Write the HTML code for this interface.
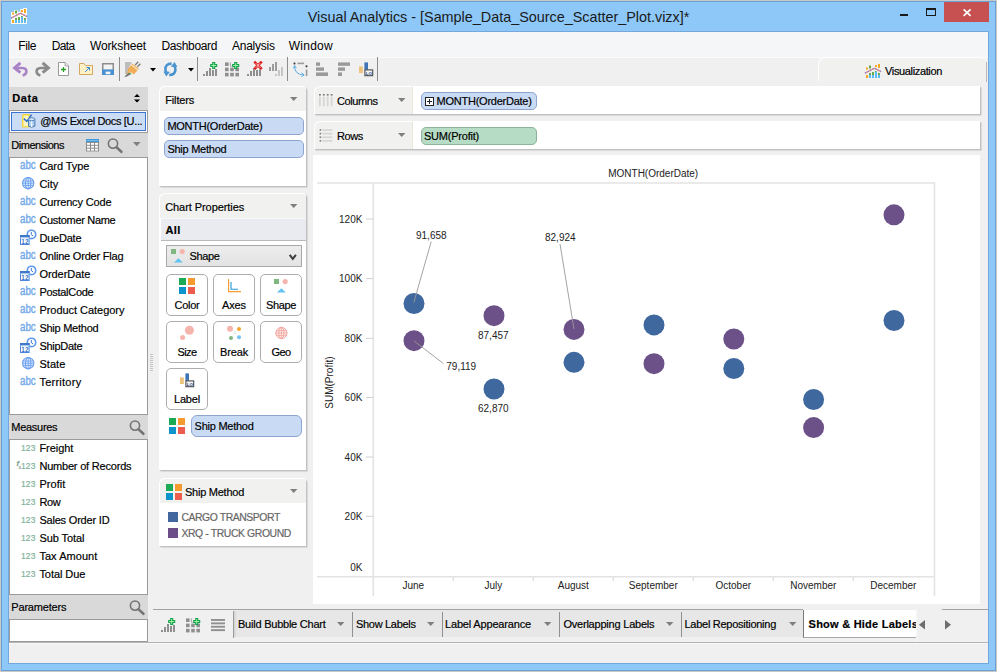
<!DOCTYPE html>
<html lang="en"><head><meta charset="utf-8"><title>Visual Analytics - [Sample_Data_Source_Scatter_Plot.vizx]*</title>
<style>

html,body{margin:0;padding:0;}
body{width:997px;height:672px;position:relative;overflow:hidden;background:#c9c9c9;font-family:"Liberation Sans",sans-serif;font-size:11px;}
div,svg,span.t{position:absolute;box-sizing:border-box;}
span.t{white-space:nowrap;-webkit-text-stroke:0.18px;}
svg{overflow:visible;}
.pill{border:1px solid #8fa5cf;background:#c9daf4;border-radius:5px;}
.gpill{border:1px solid #8fb39d;background:#b7dcc5;border-radius:5px;}
.btn{border:1px solid #adadad;background:#fff;border-radius:5px;}
.card{background:#fff;box-shadow:1px 1px 1px #bdbdbd, 2px 2px 1px #dcdcdc;}
.cardh{background:#f1f1ef;border-top:1px solid #fff;border-left:1px solid #fff;border-top-left-radius:6px;border-top-right-radius:4px;}
</style></head><body>
<div style="left:1px;top:1px;width:995px;height:670px;background:#8dc8f8;border:1px solid #6c9fd3;"></div>
<div style="left:8px;top:31px;width:981px;height:633px;background:#f0f0f0;border:1px solid #74a8dc;"></div>
<svg style="left:11px;top:8px" width="16" height="16" viewBox="0 0 16 16"><path d="M0 4 H3.1 V2.1 H6.7 V3.7 H9.2 V1 H12.2 V0 H16 V16 H0 Z" fill="#fdfaf3"/>
<rect x="1" y="4.5" width="2" height="2" fill="#f5a623"/><rect x="4" y="2.5" width="2" height="3" fill="#6aa84f"/>
<rect x="10" y="2" width="2" height="2" fill="#f5a623"/><rect x="13" y="1" width="2" height="4" fill="#f5a623"/>
<rect x="1" y="12" width="2" height="3" fill="#f5a623"/>
<rect x="4" y="10" width="2" height="2" fill="#6aa84f"/><rect x="4" y="12" width="2" height="3" fill="#5bbcf5"/>
<rect x="7" y="9" width="2" height="3" fill="#6aa84f"/><rect x="7" y="12" width="2" height="3" fill="#5bbcf5"/>
<rect x="10" y="8.5" width="2" height="6.5" fill="#5bbcf5"/><rect x="10" y="8" width="1.5" height="1" fill="#6aa84f"/>
<rect x="13" y="10" width="2" height="2" fill="#6aa84f"/><rect x="13" y="12" width="2" height="3" fill="#5bbcf5"/>
<path d="M0 10.2 L9.5 5.2 L16 8.6" fill="none" stroke="#f08f7a" stroke-width="1.3"/>
<path d="M0 10.2 L9.5 5.2 L16 8.6" fill="none" stroke="#8b84d6" stroke-width="1.3" stroke-dasharray="1.4 1.4"/></svg>
<span class="t" style="left:307.7px;top:7.51px;font-size:14.4px;line-height:19px;color:#1a1a1a;letter-spacing:-0.008px;-webkit-text-stroke:0;">Visual Analytics - [Sample_Data_Source_Scatter_Plot.vizx]*</span>
<div style="left:900px;top:14px;width:8px;height:2px;background:#1a1a1a;"></div>
<div style="left:926px;top:8px;width:10px;height:8px;border:1px solid #1a1a1a;border-top-width:2px;"></div>
<div style="left:944px;top:2px;width:45px;height:20px;background:#c75050;"></div>
<svg style="left:962px;top:8px" width="10" height="9" viewBox="0 0 10 9"><path d="M1.6 1.4 L8.6 7.8 M8.6 1.4 L1.6 7.8" stroke="#fff" stroke-width="1.7" fill="none"/></svg>
<div style="left:9px;top:32px;width:979px;height:25px;background:#f5f6f7;"></div>
<div style="left:9px;top:57px;width:979px;height:1px;background:#fbfbfb;"></div>
<span class="t" style="left:18.2px;top:37.54px;font-size:12px;line-height:16px;color:#000;letter-spacing:-0.386px;-webkit-text-stroke:0;">File</span>
<span class="t" style="left:51.7px;top:37.54px;font-size:12px;line-height:16px;color:#000;letter-spacing:-0.640px;-webkit-text-stroke:0;">Data</span>
<span class="t" style="left:89.9px;top:37.54px;font-size:12px;line-height:16px;color:#000;letter-spacing:-0.105px;-webkit-text-stroke:0;">Worksheet</span>
<span class="t" style="left:161.5px;top:37.54px;font-size:12px;line-height:16px;color:#000;letter-spacing:-0.358px;-webkit-text-stroke:0;">Dashboard</span>
<span class="t" style="left:232px;top:37.54px;font-size:12px;line-height:16px;color:#000;letter-spacing:-0.248px;-webkit-text-stroke:0;">Analysis</span>
<span class="t" style="left:288.7px;top:37.54px;font-size:12px;line-height:16px;color:#000;letter-spacing:0.269px;-webkit-text-stroke:0;">Window</span>
<div style="left:119px;top:57px;width:1px;height:24px;background:#8c8c8c;"></div>
<div style="left:197px;top:57px;width:1px;height:24px;background:#8c8c8c;"></div>
<div style="left:287px;top:57px;width:1px;height:24px;background:#8c8c8c;"></div>
<div style="left:377px;top:57px;width:1px;height:24px;background:#8c8c8c;"></div>
<svg style="left:13px;top:62px" width="15" height="15" viewBox="0 0 15 15"><path d="M7.4 0.9 L1.6 6 L7.4 10.6" fill="none" stroke="#a983c6" stroke-width="3" stroke-linejoin="miter"/><path d="M2.6 6 H9.4 Q13.4 6.2 13.4 9.6 Q13.2 12.6 9.6 13.4" fill="none" stroke="#a983c6" stroke-width="2.6"/></svg>
<svg style="left:35px;top:62px" width="15" height="15" viewBox="0 0 15 15"><path d="M7.6 0.9 L13.4 6 L7.6 10.6" fill="none" stroke="#8a8a8a" stroke-width="3" stroke-linejoin="miter"/><path d="M12.4 6 H5.6 Q1.6 6.2 1.6 9.6 Q1.8 12.6 5.4 13.4" fill="none" stroke="#8a8a8a" stroke-width="2.6"/></svg>
<svg style="left:58px;top:62px" width="11" height="14" viewBox="0 0 11 14"><path d="M0.5 0.5 H7 L10.5 4 V13.5 H0.5 Z" fill="#fff" stroke="#9a9a9a"/><path d="M7 0.5 V4 H10.5" fill="#e4e4e4" stroke="#9a9a9a" stroke-width="0.8"/><path d="M5.5 5 V10 M3 7.5 H8" stroke="#2a9d2a" stroke-width="1.3"/></svg>
<svg style="left:79px;top:63px" width="14" height="12" viewBox="0 0 14 12"><path d="M0.5 0.5 H5 L6.5 2.5 H13.5 V11.5 H0.5 Z" fill="#fdf1c7" stroke="#d2a860" stroke-width="1"/><path d="M6 9 L10.5 4.5 M7.5 4.5 H10.5 V7.5" fill="none" stroke="#3d8fd1" stroke-width="1"/></svg>
<svg style="left:102px;top:63px" width="12" height="12" viewBox="0 0 12 12"><rect x="0.75" y="0.75" width="10.5" height="7" fill="#f4f4f4" stroke="#8c8c8c" stroke-width="1.5"/><rect x="0" y="6.4" width="12" height="5.6" fill="#4a90d0"/><rect x="3.6" y="8.6" width="4.8" height="2.6" fill="#f4f4f4"/></svg>
<svg style="left:124px;top:62px" width="16" height="15" viewBox="0 0 16 15"><path d="M1 1 H7.4 M1 3 H6.4 M1 5 H5.4 M1 7 H5 M1 9 H5 M1 11 H4" stroke="#8a8a8a" stroke-width="1.1"/><path d="M0.2 14.8 L5.2 10 L7.4 12 L2.4 14.8 Z" fill="#757575"/><path d="M3.6 7.4 L8.4 1.6 L15 6.8 L9.8 12.4 Z" fill="#efad56"/><path d="M7.4 2.8 L14 8" stroke="#fbe3bd" stroke-width="1.3"/><path d="M11.2 3 L14.2 -0.2 M13.4 4.8 L16.4 1.8" stroke="#7a7a7a" stroke-width="1.3"/><path d="M4.2 7.6 L2.6 11.6 L6.8 10.6 Z" fill="#efad56"/><rect x="5.6" y="11" width="1.2" height="1.2" fill="#2ecc40"/></svg>
<svg style="left:150px;top:68px" width="6" height="4" viewBox="0 0 6 4"><path d="M0 0 H6 L3 3.6 Z" fill="#000"/></svg>
<svg style="left:163px;top:62px" width="15" height="15" viewBox="0 0 15 15"><path d="M8.6 1.6 Q2.2 1.6 2.4 7.6 Q2.6 10 4.2 11.4" fill="none" stroke="#4b94cf" stroke-width="2.6"/><path d="M0.4 9.6 L7 9.8 L3.2 14.6 Z" fill="#4b94cf"/><path d="M6.2 13 Q12.6 13 12.4 7 Q12.2 4.6 10.6 3.2" fill="none" stroke="#4b94cf" stroke-width="2.6"/><path d="M14.4 5 L7.8 4.8 L11.6 0 Z" fill="#4b94cf"/></svg>
<svg style="left:187.5px;top:68px" width="6" height="4" viewBox="0 0 6 4"><path d="M0 0 H6 L3 3.6 Z" fill="#000"/></svg>
<svg style="left:203px;top:62px" width="15" height="15" viewBox="0 0 15 15"><rect x="0" y="12" width="2" height="2" fill="#8f8f8f"/><rect x="3" y="9" width="2" height="5" fill="#8f8f8f"/><rect x="6" y="6" width="2" height="8" fill="#8f8f8f"/><rect x="9" y="8" width="2" height="6" fill="#8f8f8f"/><rect x="12" y="7" width="2" height="7" fill="#8f8f8f"/><path d="M9.7 0.5 h2 v2 h2 v2 h-2 v2 h-2 v-2 h-2 v-2 h2 z" fill="#a6ecaa" stroke="#10a548" stroke-width="1.1"/></svg>
<svg style="left:225px;top:62px" width="15" height="15" viewBox="0 0 15 15"><rect x="0" y="0.4" width="3.6" height="3.6" fill="#8f8f8f"/><rect x="0" y="5.6" width="3.6" height="3.6" fill="#8f8f8f"/><rect x="0" y="10.8" width="3.6" height="3.6" fill="#8f8f8f"/><rect x="5.2" y="0.4" width="3.6" height="3.6" fill="#8f8f8f"/><rect x="5.2" y="5.6" width="3.6" height="3.6" fill="#8f8f8f"/><rect x="5.2" y="10.8" width="3.6" height="3.6" fill="#8f8f8f"/><rect x="10.4" y="0.4" width="3.6" height="3.6" fill="#8f8f8f"/><rect x="10.4" y="5.6" width="3.6" height="3.6" fill="#8f8f8f"/><rect x="10.4" y="10.8" width="3.6" height="3.6" fill="#8f8f8f"/><rect x="4.8" y="-0.4" width="10" height="5.2" fill="#f0f0f0"/><path d="M5.4 0.4 V4 M5.4 4.3 H6.6" stroke="#8f8f8f" stroke-width="0.8" fill="none"/><path d="M9.7 0.5 h2 v2 h2 v2 h-2 v2 h-2 v-2 h-2 v-2 h2 z" fill="#a6ecaa" stroke="#10a548" stroke-width="1.1"/></svg>
<svg style="left:247px;top:62px" width="15" height="15" viewBox="0 0 15 15"><rect x="0" y="12" width="2" height="2" fill="#8f8f8f"/><rect x="3" y="9" width="2" height="5" fill="#8f8f8f"/><rect x="6" y="6" width="2" height="8" fill="#8f8f8f"/><rect x="9" y="8" width="2" height="6" fill="#8f8f8f"/><rect x="12" y="7" width="2" height="7" fill="#8f8f8f"/><rect x="7" y="-0.4" width="8" height="7.8" fill="#f0f0f0"/><path d="M8.2 0.6 L13.8 6.2 M13.8 0.6 L8.2 6.2" stroke="#e01b1b" stroke-width="2.6" stroke-linecap="square"/><path d="M8.6 1 L13.4 5.8 M13.4 1 L8.6 5.8" stroke="#f7a8a8" stroke-width="0.9"/><rect x="9.9" y="2.3" width="2.2" height="2.2" fill="#f7a8a8"/></svg>
<svg style="left:269px;top:62px" width="15" height="15" viewBox="0 0 15 15"><rect x="0" y="5" width="2" height="4" fill="#9c9c9c"/><rect x="3" y="2" width="2" height="7" fill="#9c9c9c"/><rect x="6" y="0" width="2" height="9" fill="#9c9c9c"/><rect x="6" y="12" width="2" height="2" fill="#c6c6c6"/><rect x="9" y="8" width="2" height="6" fill="#c6c6c6"/><rect x="12" y="5" width="2" height="9" fill="#c6c6c6"/></svg>
<svg style="left:293px;top:62px" width="15" height="15" viewBox="0 0 15 15"><rect x="0.6" y="0.6" width="1.8" height="1.8" fill="#333"/><rect x="4.5" y="0.6" width="6.6" height="1.6" fill="#9a9a9a"/><rect x="12.6" y="3.4" width="1.8" height="1.8" fill="#333"/><rect x="12.8" y="7.6" width="1.6" height="6.4" fill="#9a9a9a"/><path d="M1.6 4.4 Q1.6 12.4 10.6 13" fill="none" stroke="#5aaee6" stroke-width="1"/><path d="M0.4 6.4 L1.6 3.6 L3.4 6" fill="none" stroke="#5aaee6" stroke-width="1"/><path d="M8.6 10.8 L11.2 13 L8.4 14.6" fill="none" stroke="#5aaee6" stroke-width="1"/></svg>
<svg style="left:316px;top:62px" width="12" height="15" viewBox="0 0 12 15"><rect x="0" y="0.4" width="4" height="3.4" fill="#9a9a9a"/><rect x="0" y="5.4" width="8" height="3.4" fill="#9a9a9a"/><rect x="0" y="10.4" width="12" height="3.6" fill="#9a9a9a"/></svg>
<svg style="left:338px;top:62px" width="12" height="15" viewBox="0 0 12 15"><rect x="0" y="0.4" width="12" height="3.4" fill="#9a9a9a"/><rect x="0" y="5.4" width="7" height="3.4" fill="#9a9a9a"/><rect x="0" y="10.4" width="4" height="3.6" fill="#9a9a9a"/></svg>
<svg style="left:359px;top:62px" width="15" height="15" viewBox="0 0 15 15"><rect x="0" y="4.4" width="3.8" height="6.6" fill="#ecc27c"/><rect x="5.4" y="0.4" width="3.6" height="7.4" fill="#3f75b5"/><rect x="5.9" y="7.9" width="7.8" height="5.8" fill="#f6f6f6" stroke="#4a4a4a" stroke-width="1.1"/><text x="9.8" y="12.5" font-size="4.4" font-weight="bold" text-anchor="middle" fill="#1d3f87" font-family="Liberation Sans, sans-serif">LO</text></svg>
<div style="left:818px;top:57px;width:169px;height:24px;background:#f1f1ef;border-top:1px solid #fff;border-left:1px solid #fff;border-top-left-radius:7px;border-top-right-radius:7px;"></div>
<div style="left:986px;top:62px;width:1px;height:20px;background:#b9b9b9;"></div>
<svg style="left:865px;top:64px" width="16" height="14" viewBox="0 1 16 14">
<rect x="1" y="4.5" width="2" height="2" fill="#f5a623"/><rect x="4" y="2.5" width="2" height="3" fill="#6aa84f"/>
<rect x="10" y="2" width="2" height="2" fill="#f5a623"/><rect x="13" y="1" width="2" height="4" fill="#f5a623"/>
<rect x="1" y="12" width="2" height="3" fill="#f5a623"/>
<rect x="4" y="10" width="2" height="2" fill="#6aa84f"/><rect x="4" y="12" width="2" height="3" fill="#5bbcf5"/>
<rect x="7" y="9" width="2" height="3" fill="#6aa84f"/><rect x="7" y="12" width="2" height="3" fill="#5bbcf5"/>
<rect x="10" y="8.5" width="2" height="6.5" fill="#5bbcf5"/><rect x="10" y="8" width="1.5" height="1" fill="#6aa84f"/>
<rect x="13" y="10" width="2" height="2" fill="#6aa84f"/><rect x="13" y="12" width="2" height="3" fill="#5bbcf5"/>
<path d="M0 10.2 L9.5 5.2 L16 8.6" fill="none" stroke="#f08f7a" stroke-width="1.3"/>
<path d="M0 10.2 L9.5 5.2 L16 8.6" fill="none" stroke="#8b84d6" stroke-width="1.3" stroke-dasharray="1.4 1.4"/></svg>
<span class="t" style="left:885px;top:64.19px;font-size:11px;line-height:14px;color:#000;letter-spacing:-0.351px;">Visualization</span>
<div style="left:9px;top:87px;width:139px;height:555px;background:#d9d9d9;"></div>
<span class="t" style="left:12.2px;top:90.99px;font-size:11px;line-height:14px;color:#000;font-weight:bold;letter-spacing:0.614px;">Data</span>
<svg style="left:133.5px;top:94px" width="6" height="9" viewBox="0 0 6 9"><path d="M0 3 L3 0 L6 3 Z M0 5.4 L3 8.6 L6 5.4 Z" fill="#000"/></svg>
<div style="left:9px;top:110px;width:139px;height:23px;background:#fff;border:1px solid #9b9b9b;"></div>
<div style="left:11px;top:112px;width:135px;height:19px;background:#cbdcf5;border:1px solid #3c74d6;"></div>
<svg style="left:22px;top:114px" width="13" height="14" viewBox="0 0 13 14"><rect x="0.7" y="0.7" width="6.8" height="12.2" rx="0.8" fill="#fdf6c3" stroke="#f2d43c" stroke-width="1.4"/><path d="M1.8 4.6 L4.8 7.4 L9.6 0.6" fill="none" stroke="#3070c4" stroke-width="1.5"/><path d="M6.5 5.2 V12.2 Q9.7 14.2 12.9 12.2 V5.2" fill="#a9c9ec" stroke="#4b7cb8" stroke-width="1"/><ellipse cx="9.7" cy="5.2" rx="3.2" ry="1.5" fill="#d5e6f8" stroke="#4b7cb8" stroke-width="0.9"/><path d="M9.6 7.4 V13" stroke="#eef5fc" stroke-width="1.4"/></svg>
<span class="t" style="left:40.3px;top:113.79px;font-size:11px;line-height:14px;color:#000;letter-spacing:-0.348px;">@MS Excel Docs [U...</span>
<span class="t" style="left:11.3px;top:137.59px;font-size:11px;line-height:14px;color:#000;letter-spacing:-0.477px;">Dimensions</span>
<svg style="left:86px;top:138.7px" width="13" height="13" viewBox="0 0 13 13"><rect x="0" y="0" width="13" height="12.4" fill="#8a8a8a"/><rect x="0" y="0" width="13" height="2.9" fill="#3c98d8"/><rect x="0.6" y="1.1" width="11.8" height="0.8" fill="#86c4ee"/><rect x="1" y="3.9" width="3" height="1.9" fill="#fff"/><rect x="1" y="6.8" width="3" height="1.9" fill="#fff"/><rect x="1" y="9.7" width="3" height="1.9" fill="#fff"/><rect x="5" y="3.9" width="3" height="1.9" fill="#fff"/><rect x="5" y="6.8" width="3" height="1.9" fill="#fff"/><rect x="5" y="9.7" width="3" height="1.9" fill="#fff"/><rect x="9" y="3.9" width="3" height="1.9" fill="#fff"/><rect x="9" y="6.8" width="3" height="1.9" fill="#fff"/><rect x="9" y="9.7" width="3" height="1.9" fill="#fff"/></svg>
<svg style="left:107px;top:138px" width="16" height="15" viewBox="0 0 16 15"><circle cx="6" cy="5.6" r="4.6" fill="none" stroke="#747474" stroke-width="1.6"/><path d="M9.6 9.4 L14.4 13.8" stroke="#747474" stroke-width="2.6" stroke-linecap="round"/></svg>
<svg style="left:132.8px;top:141.8px" width="8" height="5" viewBox="0 0 8 5"><path d="M0 0 H7.6 L3.8 4.2 Z" fill="#808080"/></svg>
<div style="left:9px;top:157px;width:139px;height:258px;background:#fff;border:1px solid #9b9b9b;"></div>
<span class="t" style="left:20.1px;top:157.44px;font-size:12px;line-height:16px;color:#72a9e8;-webkit-text-stroke:0.4px #72a9e8;transform:scaleX(0.81);transform-origin:0 0;">abc</span>
<span class="t" style="left:39.4px;top:158.79px;font-size:11px;line-height:14px;color:#000;letter-spacing:-0.062px;">Card Type</span>
<svg style="left:22.2px;top:177.29999999999998px" width="12.4" height="12.4" viewBox="0 0 11 11"><circle cx="5.5" cy="5.5" r="5" fill="#e9f2fc" stroke="#6a9ff0" stroke-width="1"/><ellipse cx="5.5" cy="5.5" rx="2.4" ry="5" fill="none" stroke="#6a9ff0" stroke-width="0.9"/><path d="M5.5 0.5 V10.5 M0.8 3.6 H10.2 M0.5 5.5 H10.5 M0.8 7.4 H10.2" stroke="#6a9ff0" stroke-width="0.8" fill="none"/></svg>
<span class="t" style="left:39.4px;top:176.79px;font-size:11px;line-height:14px;color:#000;letter-spacing:0.012px;">City</span>
<span class="t" style="left:20.1px;top:193.44px;font-size:12px;line-height:16px;color:#72a9e8;-webkit-text-stroke:0.4px #72a9e8;transform:scaleX(0.81);transform-origin:0 0;">abc</span>
<span class="t" style="left:39.4px;top:194.79px;font-size:11px;line-height:14px;color:#000;letter-spacing:-0.153px;">Currency Code</span>
<span class="t" style="left:20.1px;top:211.44px;font-size:12px;line-height:16px;color:#72a9e8;-webkit-text-stroke:0.4px #72a9e8;transform:scaleX(0.81);transform-origin:0 0;">abc</span>
<span class="t" style="left:39.4px;top:212.79px;font-size:11px;line-height:14px;color:#000;letter-spacing:-0.314px;">Customer Name</span>
<svg style="left:19.8px;top:229.2px" width="16" height="16" viewBox="0 0 16 16"><circle cx="11.5" cy="5.4" r="4.2" fill="#fff" stroke="#5b97ea" stroke-width="1.6"/><path d="M11.3 3 V5.7 L13.2 7" fill="none" stroke="#3f78c8" stroke-width="1"/><rect x="0.5" y="6.5" width="8.6" height="9" fill="#fff" stroke="#4a86e0" stroke-width="1"/><rect x="0" y="6" width="9.6" height="2.4" fill="#3f78c8"/><rect x="0" y="8.4" width="9.6" height="0.9" fill="#a9c8f2"/><text x="4.9" y="14.6" font-size="6.4" font-weight="bold" text-anchor="middle" fill="#3f78c8" font-family="Liberation Sans, sans-serif">12</text></svg>
<span class="t" style="left:39.4px;top:230.79px;font-size:11px;line-height:14px;color:#000;letter-spacing:-0.203px;">DueDate</span>
<span class="t" style="left:20.1px;top:247.44px;font-size:12px;line-height:16px;color:#72a9e8;-webkit-text-stroke:0.4px #72a9e8;transform:scaleX(0.81);transform-origin:0 0;">abc</span>
<span class="t" style="left:39.4px;top:248.79px;font-size:11px;line-height:14px;color:#000;letter-spacing:-0.202px;">Online Order Flag</span>
<svg style="left:19.8px;top:265.20000000000005px" width="16" height="16" viewBox="0 0 16 16"><circle cx="11.5" cy="5.4" r="4.2" fill="#fff" stroke="#5b97ea" stroke-width="1.6"/><path d="M11.3 3 V5.7 L13.2 7" fill="none" stroke="#3f78c8" stroke-width="1"/><rect x="0.5" y="6.5" width="8.6" height="9" fill="#fff" stroke="#4a86e0" stroke-width="1"/><rect x="0" y="6" width="9.6" height="2.4" fill="#3f78c8"/><rect x="0" y="8.4" width="9.6" height="0.9" fill="#a9c8f2"/><text x="4.9" y="14.6" font-size="6.4" font-weight="bold" text-anchor="middle" fill="#3f78c8" font-family="Liberation Sans, sans-serif">12</text></svg>
<span class="t" style="left:39.4px;top:266.79px;font-size:11px;line-height:14px;color:#000;letter-spacing:-0.040px;">OrderDate</span>
<span class="t" style="left:20.1px;top:283.44px;font-size:12px;line-height:16px;color:#72a9e8;-webkit-text-stroke:0.4px #72a9e8;transform:scaleX(0.81);transform-origin:0 0;">abc</span>
<span class="t" style="left:39.4px;top:284.79px;font-size:11px;line-height:14px;color:#000;letter-spacing:-0.287px;">PostalCode</span>
<span class="t" style="left:20.1px;top:301.44px;font-size:12px;line-height:16px;color:#72a9e8;-webkit-text-stroke:0.4px #72a9e8;transform:scaleX(0.81);transform-origin:0 0;">abc</span>
<span class="t" style="left:39.4px;top:302.79px;font-size:11px;line-height:14px;color:#000;letter-spacing:-0.038px;">Product Category</span>
<span class="t" style="left:20.1px;top:319.44px;font-size:12px;line-height:16px;color:#72a9e8;-webkit-text-stroke:0.4px #72a9e8;transform:scaleX(0.81);transform-origin:0 0;">abc</span>
<span class="t" style="left:39.4px;top:320.79px;font-size:11px;line-height:14px;color:#000;letter-spacing:-0.251px;">Ship Method</span>
<svg style="left:19.8px;top:337.20000000000005px" width="16" height="16" viewBox="0 0 16 16"><circle cx="11.5" cy="5.4" r="4.2" fill="#fff" stroke="#5b97ea" stroke-width="1.6"/><path d="M11.3 3 V5.7 L13.2 7" fill="none" stroke="#3f78c8" stroke-width="1"/><rect x="0.5" y="6.5" width="8.6" height="9" fill="#fff" stroke="#4a86e0" stroke-width="1"/><rect x="0" y="6" width="9.6" height="2.4" fill="#3f78c8"/><rect x="0" y="8.4" width="9.6" height="0.9" fill="#a9c8f2"/><text x="4.9" y="14.6" font-size="6.4" font-weight="bold" text-anchor="middle" fill="#3f78c8" font-family="Liberation Sans, sans-serif">12</text></svg>
<span class="t" style="left:39.4px;top:338.79px;font-size:11px;line-height:14px;color:#000;letter-spacing:-0.283px;">ShipDate</span>
<svg style="left:22.2px;top:357.3px" width="12.4" height="12.4" viewBox="0 0 11 11"><circle cx="5.5" cy="5.5" r="5" fill="#e9f2fc" stroke="#6a9ff0" stroke-width="1"/><ellipse cx="5.5" cy="5.5" rx="2.4" ry="5" fill="none" stroke="#6a9ff0" stroke-width="0.9"/><path d="M5.5 0.5 V10.5 M0.8 3.6 H10.2 M0.5 5.5 H10.5 M0.8 7.4 H10.2" stroke="#6a9ff0" stroke-width="0.8" fill="none"/></svg>
<span class="t" style="left:39.4px;top:356.79px;font-size:11px;line-height:14px;color:#000;letter-spacing:0.062px;">State</span>
<span class="t" style="left:20.1px;top:373.44px;font-size:12px;line-height:16px;color:#72a9e8;-webkit-text-stroke:0.4px #72a9e8;transform:scaleX(0.81);transform-origin:0 0;">abc</span>
<span class="t" style="left:39.4px;top:374.79px;font-size:11px;line-height:14px;color:#000;letter-spacing:0.252px;">Territory</span>
<span class="t" style="left:11.3px;top:420.19px;font-size:11px;line-height:14px;color:#000;letter-spacing:-0.287px;">Measures</span>
<svg style="left:128.5px;top:420px" width="16" height="15" viewBox="0 0 16 15"><circle cx="6" cy="5.6" r="4.6" fill="none" stroke="#747474" stroke-width="1.6"/><path d="M9.6 9.4 L14.4 13.8" stroke="#747474" stroke-width="2.6" stroke-linecap="round"/></svg>
<div style="left:9px;top:439px;width:139px;height:156px;background:#fff;border:1px solid #9b9b9b;"></div>
<span class="t" style="left:21px;top:442.75px;font-size:8.5px;line-height:11px;color:#82b29a;letter-spacing:0.104px;">123</span>
<span class="t" style="left:39.4px;top:440.99px;font-size:11px;line-height:14px;color:#000;letter-spacing:-0.036px;">Freight</span>
<span class="t" style="left:21px;top:460.75px;font-size:8.5px;line-height:11px;color:#82b29a;letter-spacing:0.104px;">123</span>
<span class="t" style="left:16.4px;top:458.60px;font-size:7.5px;line-height:10px;color:#7d9e8c;font-style:italic;font-weight:bold;">f</span>
<span class="t" style="left:18.6px;top:463.67px;font-size:5px;line-height:6px;color:#7d9e8c;">x</span>
<span class="t" style="left:39.4px;top:458.99px;font-size:11px;line-height:14px;color:#000;letter-spacing:-0.199px;">Number of Records</span>
<span class="t" style="left:21px;top:478.75px;font-size:8.5px;line-height:11px;color:#82b29a;letter-spacing:0.104px;">123</span>
<span class="t" style="left:39.4px;top:476.99px;font-size:11px;line-height:14px;color:#000;letter-spacing:0.052px;">Profit</span>
<span class="t" style="left:21px;top:496.75px;font-size:8.5px;line-height:11px;color:#82b29a;letter-spacing:0.104px;">123</span>
<span class="t" style="left:39.4px;top:494.99px;font-size:11px;line-height:14px;color:#000;letter-spacing:-0.339px;">Row</span>
<span class="t" style="left:21px;top:514.75px;font-size:8.5px;line-height:11px;color:#82b29a;letter-spacing:0.104px;">123</span>
<span class="t" style="left:39.4px;top:512.99px;font-size:11px;line-height:14px;color:#000;letter-spacing:-0.196px;">Sales Order ID</span>
<span class="t" style="left:21px;top:532.75px;font-size:8.5px;line-height:11px;color:#82b29a;letter-spacing:0.104px;">123</span>
<span class="t" style="left:39.4px;top:530.99px;font-size:11px;line-height:14px;color:#000;letter-spacing:-0.075px;">Sub Total</span>
<span class="t" style="left:21px;top:550.75px;font-size:8.5px;line-height:11px;color:#82b29a;letter-spacing:0.104px;">123</span>
<span class="t" style="left:39.4px;top:548.99px;font-size:11px;line-height:14px;color:#000;letter-spacing:0.052px;">Tax Amount</span>
<span class="t" style="left:21px;top:568.75px;font-size:8.5px;line-height:11px;color:#82b29a;letter-spacing:0.104px;">123</span>
<span class="t" style="left:39.4px;top:566.99px;font-size:11px;line-height:14px;color:#000;letter-spacing:-0.054px;">Total Due</span>
<span class="t" style="left:11.3px;top:600.19px;font-size:11px;line-height:14px;color:#000;letter-spacing:-0.186px;">Parameters</span>
<svg style="left:128.5px;top:600px" width="16" height="15" viewBox="0 0 16 15"><circle cx="6" cy="5.6" r="4.6" fill="none" stroke="#747474" stroke-width="1.6"/><path d="M9.6 9.4 L14.4 13.8" stroke="#747474" stroke-width="2.6" stroke-linecap="round"/></svg>
<div style="left:9px;top:619px;width:139px;height:23px;background:#fff;border:1px solid #9b9b9b;"></div>
<div style="left:150px;top:354px;width:3px;height:1px;background:#c4c4c4;"></div>
<div style="left:150px;top:356px;width:3px;height:1px;background:#c4c4c4;"></div>
<div style="left:150px;top:358px;width:3px;height:1px;background:#c4c4c4;"></div>
<div style="left:150px;top:360px;width:3px;height:1px;background:#c4c4c4;"></div>
<div style="left:150px;top:362px;width:3px;height:1px;background:#c4c4c4;"></div>
<div style="left:150px;top:364px;width:3px;height:1px;background:#c4c4c4;"></div>
<div style="left:150px;top:366px;width:3px;height:1px;background:#c4c4c4;"></div>
<div style="left:150px;top:368px;width:3px;height:1px;background:#c4c4c4;"></div>
<div style="left:150px;top:370px;width:3px;height:1px;background:#c4c4c4;"></div>
<div class="card" style="border-top-left-radius:6px;border-top-right-radius:4px;left:159px;top:86px;width:147px;height:100px;"></div>
<div class="cardh" style="left:159px;top:86px;width:147px;height:25px;"></div>
<span class="t" style="left:165.2px;top:92.59px;font-size:11px;line-height:14px;color:#000;letter-spacing:-0.136px;">Filters</span>
<svg style="left:290px;top:97px" width="8" height="4" viewBox="0 0 8 4"><path d="M0 0 H7.4 L3.7 4 Z" fill="#7f7f7f"/></svg>
<div class="pill" style="left:164px;top:117px;width:140px;height:18px;"></div>
<span class="t" style="left:167.4px;top:118.99px;font-size:11px;line-height:14px;color:#000;letter-spacing:-0.251px;">MONTH(OrderDate)</span>
<div class="pill" style="left:164px;top:140px;width:140px;height:18px;"></div>
<span class="t" style="left:167.4px;top:141.99px;font-size:11px;line-height:14px;color:#000;letter-spacing:-0.251px;">Ship Method</span>
<div class="card" style="border-top-left-radius:6px;border-top-right-radius:4px;left:159px;top:193px;width:147px;height:277px;"></div>
<div class="cardh" style="left:159px;top:193px;width:147px;height:25px;"></div>
<span class="t" style="left:165.2px;top:199.79px;font-size:11px;line-height:14px;color:#000;letter-spacing:-0.068px;">Chart Properties</span>
<svg style="left:290px;top:204px" width="8" height="4" viewBox="0 0 8 4"><path d="M0 0 H7.4 L3.7 4 Z" fill="#7f7f7f"/></svg>
<div style="left:161px;top:218px;width:145px;height:23px;background:#e9ebf1;border-bottom:1px solid #b9b9b9;border-top:1px solid #f7f7f7;"></div>
<span class="t" style="left:165.6px;top:222.59px;font-size:11px;line-height:14px;color:#000;font-weight:bold;letter-spacing:0.312px;">All</span>
<div style="left:166px;top:245px;width:136px;height:22px;background:linear-gradient(#ededed,#e3e3e3);border:1px solid #a9a9a9;"></div>
<svg style="left:171px;top:249px" width="14" height="14" viewBox="0 0 14 14"><rect x="0" y="0" width="5" height="5" fill="#7fb77e"/><circle cx="11.2" cy="2.6" r="2.6" fill="#f5b5ad"/><path d="M3 13.6 L7.4 9.2 L11.8 13.6 Z" fill="#62c2f2"/></svg>
<span class="t" style="left:189.6px;top:249.19px;font-size:11px;line-height:14px;color:#000;letter-spacing:-0.362px;">Shape</span>
<svg style="left:289px;top:253.6px" width="8" height="7" viewBox="0 0 8 7"><path d="M0.7 0.8 L3.8 4.9 L6.9 0.8" fill="none" stroke="#3c3c3c" stroke-width="2"/></svg>
<div class="btn" style="left:166px;top:274px;width:42px;height:42px;"></div>
<span class="t" style="left:187px;top:298.19px;font-size:11px;line-height:14px;color:#000;letter-spacing:-0.259px;transform:translateX(-50%);">Color</span>
<svg style="left:179px;top:278px" width="16" height="16" viewBox="0 0 16 16"><rect x="0" y="0" width="7" height="7" fill="#1bab57"/><rect x="9" y="0" width="7" height="7" fill="#f59a2e"/><rect x="0" y="9" width="7" height="7" fill="#0d94cb"/><rect x="9" y="9" width="7" height="7" fill="#ec5c4f"/></svg>
<div class="btn" style="left:213px;top:274px;width:42px;height:42px;"></div>
<span class="t" style="left:234px;top:298.19px;font-size:11px;line-height:14px;color:#000;letter-spacing:-0.117px;transform:translateX(-50%);">Axes</span>
<svg style="left:228px;top:279px" width="13" height="14" viewBox="0 0 13 14"><path d="M0.6 0 V12.6 H13" fill="none" stroke="#f59a2e" stroke-width="1.1"/><path d="M3 3 V10.2 H10" fill="none" stroke="#2196d6" stroke-width="1.1"/></svg>
<div class="btn" style="left:260px;top:274px;width:42px;height:42px;"></div>
<span class="t" style="left:281px;top:298.19px;font-size:11px;line-height:14px;color:#000;letter-spacing:-0.362px;transform:translateX(-50%);">Shape</span>
<svg style="left:274px;top:279px" width="14" height="14" viewBox="0 0 14 14"><rect x="0" y="0" width="5" height="5" fill="#7fb77e"/><circle cx="11.2" cy="2.6" r="2.6" fill="#f5b5ad"/><path d="M3 13.6 L7.4 9.2 L11.8 13.6 Z" fill="#62c2f2"/></svg>
<div class="btn" style="left:166px;top:321px;width:42px;height:42px;"></div>
<span class="t" style="left:187px;top:345.19px;font-size:11px;line-height:14px;color:#000;letter-spacing:-0.602px;transform:translateX(-50%);">Size</span>
<svg style="left:180px;top:325px" width="16" height="16" viewBox="0 0 16 16"><circle cx="9.4" cy="5.3" r="4.5" fill="#f5b5ad"/><circle cx="2.6" cy="12.5" r="2.5" fill="#f5b5ad"/></svg>
<div class="btn" style="left:213px;top:321px;width:42px;height:42px;"></div>
<span class="t" style="left:234px;top:345.19px;font-size:11px;line-height:14px;color:#000;letter-spacing:-0.150px;transform:translateX(-50%);">Break</span>
<svg style="left:226px;top:325px" width="16" height="16" viewBox="0 0 16 16"><circle cx="4" cy="3.8" r="3" fill="#f5b5ad"/><circle cx="13" cy="4" r="2" fill="#f7a52e"/><circle cx="5" cy="13" r="2" fill="#7fb77e"/><circle cx="13" cy="12.2" r="2" fill="#74c4f5"/><path d="M7.6 6.4 L10.4 9.6 M10 6 L7.6 9.4" stroke="#c4c4c4" stroke-width="0.7" stroke-dasharray="1.2 1.2"/></svg>
<div class="btn" style="left:260px;top:321px;width:42px;height:42px;"></div>
<span class="t" style="left:281px;top:345.19px;font-size:11px;line-height:14px;color:#000;letter-spacing:-0.599px;transform:translateX(-50%);">Geo</span>
<svg style="left:275px;top:327px" width="13" height="13" viewBox="0 0 13 13"><circle cx="6.4" cy="6" r="5.6" fill="#fdeeee" stroke="#f2a49c" stroke-width="1"/><ellipse cx="6.4" cy="6" rx="2.6" ry="5.6" fill="none" stroke="#f2a49c" stroke-width="0.9"/><path d="M6.4 0.4 V11.6 M1.2 3.6 H11.6 M0.8 6 H12 M1.2 8.4 H11.6" stroke="#f2a49c" stroke-width="0.8"/></svg>
<div class="btn" style="left:166px;top:368px;width:42px;height:42px;"></div>
<span class="t" style="left:187px;top:392.19px;font-size:11px;line-height:14px;color:#000;letter-spacing:-0.184px;transform:translateX(-50%);">Label</span>
<svg style="left:180px;top:373px" width="15" height="15" viewBox="0 0 15 15"><rect x="0" y="4.4" width="3.8" height="6.6" fill="#ecc27c"/><rect x="5.4" y="0.4" width="3.6" height="7.4" fill="#3f75b5"/><rect x="5.9" y="7.9" width="7.8" height="5.8" fill="#f6f6f6" stroke="#4a4a4a" stroke-width="1.1"/><text x="9.8" y="12.5" font-size="4.4" font-weight="bold" text-anchor="middle" fill="#1d3f87" font-family="Liberation Sans, sans-serif">LO</text></svg>
<svg style="left:169px;top:418px" width="16" height="16" viewBox="0 0 16 16"><rect x="0" y="0" width="7" height="7" fill="#1bab57"/><rect x="9" y="0" width="7" height="7" fill="#f59a2e"/><rect x="0" y="9" width="7" height="7" fill="#0d94cb"/><rect x="9" y="9" width="7" height="7" fill="#ec5c4f"/></svg>
<div class="pill" style="border-radius:6px;left:191px;top:415px;width:111px;height:22px;"></div>
<span class="t" style="left:194.6px;top:419.19px;font-size:11px;line-height:14px;color:#000;letter-spacing:-0.251px;">Ship Method</span>
<div class="card" style="border-top-left-radius:6px;border-top-right-radius:4px;left:159px;top:478px;width:147px;height:68px;"></div>
<div class="cardh" style="left:159px;top:478px;width:147px;height:25px;"></div>
<svg style="left:166px;top:484px" width="16" height="16" viewBox="0 0 16 16"><rect x="0" y="0" width="7" height="7" fill="#1bab57"/><rect x="9" y="0" width="7" height="7" fill="#f59a2e"/><rect x="0" y="9" width="7" height="7" fill="#0d94cb"/><rect x="9" y="9" width="7" height="7" fill="#ec5c4f"/></svg>
<span class="t" style="left:185px;top:484.99px;font-size:11px;line-height:14px;color:#000;letter-spacing:-0.251px;">Ship Method</span>
<svg style="left:290px;top:489px" width="8" height="4" viewBox="0 0 8 4"><path d="M0 0 H7.4 L3.7 4 Z" fill="#7f7f7f"/></svg>
<div style="left:168px;top:512px;width:10px;height:10px;background:#42669e;"></div>
<div style="left:168px;top:528px;width:10px;height:10px;background:#6d4d87;"></div>
<span class="t" style="left:181.4px;top:511.20px;font-size:10.4px;line-height:14px;color:#666;letter-spacing:-0.414px;">CARGO TRANSPORT</span>
<span class="t" style="left:181.4px;top:527.20px;font-size:10.4px;line-height:14px;color:#666;letter-spacing:-0.379px;">XRQ - TRUCK GROUND</span>
<div style="left:314px;top:86px;width:666px;height:28px;background:#fff;box-shadow:1px 1px 1px #bdbdbd,2px 2px 1px #dcdcdc;border-top-left-radius:6px;"></div>
<div style="left:314px;top:86px;width:99px;height:28px;background:#f1f1ef;border-top:1px solid #fff;border-left:1px solid #fff;border-top-left-radius:6px;border-right:1px solid #ebe6d8;"></div>
<span class="t" style="left:337px;top:94.19px;font-size:11px;line-height:14px;color:#000;letter-spacing:-0.415px;">Columns</span>
<svg style="left:397.5px;top:98px" width="8" height="4" viewBox="0 0 8 4"><path d="M0 0 H7.4 L3.7 4 Z" fill="#7f7f7f"/></svg>
<div style="left:314px;top:121px;width:666px;height:28px;background:#fff;box-shadow:1px 1px 1px #bdbdbd,2px 2px 1px #dcdcdc;border-top-left-radius:6px;"></div>
<div style="left:314px;top:121px;width:99px;height:28px;background:#f1f1ef;border-top:1px solid #fff;border-left:1px solid #fff;border-top-left-radius:6px;border-right:1px solid #ebe6d8;"></div>
<span class="t" style="left:337px;top:129.19px;font-size:11px;line-height:14px;color:#000;letter-spacing:-0.379px;">Rows</span>
<svg style="left:397.5px;top:133px" width="8" height="4" viewBox="0 0 8 4"><path d="M0 0 H7.4 L3.7 4 Z" fill="#7f7f7f"/></svg>
<svg style="left:319px;top:93px" width="14" height="14" viewBox="0 0 14 14"><rect x="0" y="1" width="1.8" height="1.6" fill="#7c7c7c"/><rect x="0" y="3.6" width="1.8" height="9.6" fill="#d6d6d6"/><rect x="3.9" y="1" width="1.8" height="1.6" fill="#7c7c7c"/><rect x="3.9" y="3.6" width="1.8" height="9.6" fill="#d6d6d6"/><rect x="7.8" y="1" width="1.8" height="1.6" fill="#7c7c7c"/><rect x="7.8" y="3.6" width="1.8" height="9.6" fill="#d6d6d6"/><rect x="11.7" y="1" width="1.8" height="1.6" fill="#7c7c7c"/><rect x="11.7" y="3.6" width="1.8" height="9.6" fill="#d6d6d6"/></svg>
<svg style="left:319px;top:129px" width="14" height="14" viewBox="0 0 14 14"><rect x="0.6" y="0.2" width="1.6" height="1.6" fill="#7c7c7c"/><rect x="3.4" y="0.2" width="10" height="1.7" fill="#d6d6d6"/><rect x="0.6" y="3.8" width="1.6" height="1.6" fill="#7c7c7c"/><rect x="3.4" y="3.8" width="10" height="1.7" fill="#d6d6d6"/><rect x="0.6" y="7.4" width="1.6" height="1.6" fill="#7c7c7c"/><rect x="3.4" y="7.4" width="10" height="1.7" fill="#d6d6d6"/><rect x="0.6" y="11" width="1.6" height="1.6" fill="#7c7c7c"/><rect x="3.4" y="11" width="10" height="1.7" fill="#d6d6d6"/></svg>
<div class="pill" style="left:421px;top:92px;width:116px;height:18px;"></div>
<svg style="left:425px;top:96.5px" width="9" height="9" viewBox="0 0 9 9"><rect x="0.5" y="0.5" width="8" height="8" fill="#fff" stroke="#222" stroke-width="1"/><path d="M2 4.5 H7 M4.5 2 V7" stroke="#222" stroke-width="1"/></svg>
<span class="t" style="left:436.6px;top:93.99px;font-size:11px;line-height:14px;color:#000;letter-spacing:-0.251px;">MONTH(OrderDate)</span>
<div class="gpill" style="left:421px;top:127px;width:116px;height:18px;"></div>
<span class="t" style="left:424px;top:128.99px;font-size:11px;line-height:14px;color:#000;letter-spacing:-0.223px;">SUM(Profit)</span>
<div style="left:313px;top:155px;width:667px;height:449px;background:#fff;"></div>
<svg style="left:0;top:0" width="997" height="672" font-family="Liberation Sans, sans-serif" font-size="10" fill="#222"><path d="M317 183 H934.5 V596" fill="none" stroke="#e3e3e3" stroke-width="1.6"/><path d="M373.3 183 V596" stroke="#e3e3e3" stroke-width="1.6"/><path d="M317 576.7 H934.5" stroke="#e3e3e3" stroke-width="1.6"/><path d="M453.3 576.7 V581" stroke="#dcdcdc" stroke-width="1.2"/><path d="M533.3 576.7 V581" stroke="#dcdcdc" stroke-width="1.2"/><path d="M613.3 576.7 V581" stroke="#dcdcdc" stroke-width="1.2"/><path d="M693.3 576.7 V581" stroke="#dcdcdc" stroke-width="1.2"/><path d="M773.3 576.7 V581" stroke="#dcdcdc" stroke-width="1.2"/><path d="M853.3 576.7 V581" stroke="#dcdcdc" stroke-width="1.2"/><path d="M366 219 H373" stroke="#d0d0d0" stroke-width="1"/><text x="362.4" y="222.6" text-anchor="end">120K</text><path d="M366 278.6 H373" stroke="#d0d0d0" stroke-width="1"/><text x="362.4" y="282.20000000000005" text-anchor="end">100K</text><path d="M366 338.3 H373" stroke="#d0d0d0" stroke-width="1"/><text x="362.4" y="341.90000000000003" text-anchor="end">80K</text><path d="M366 397.5 H373" stroke="#d0d0d0" stroke-width="1"/><text x="362.4" y="401.1" text-anchor="end">60K</text><path d="M366 457 H373" stroke="#d0d0d0" stroke-width="1"/><text x="362.4" y="460.6" text-anchor="end">40K</text><path d="M366 516.3 H373" stroke="#d0d0d0" stroke-width="1"/><text x="362.4" y="519.9" text-anchor="end">20K</text><text x="362.4" y="570.6" text-anchor="end">0K</text><text x="413.3" y="588.8" text-anchor="middle">June</text><text x="493.3" y="588.8" text-anchor="middle">July</text><text x="573.3" y="588.8" text-anchor="middle">August</text><text x="653.3" y="588.8" text-anchor="middle">September</text><text x="733.3" y="588.8" text-anchor="middle">October</text><text x="813.3" y="588.8" text-anchor="middle">November</text><text x="893.3" y="588.8" text-anchor="middle">December</text><text x="653.2" y="177" text-anchor="middle">MONTH(OrderDate)</text><text transform="translate(333.4 382.6) rotate(-90)" text-anchor="middle">SUM(Profit)</text><circle cx="414" cy="303.5" r="10.5" fill="#3f689e"/><circle cx="414" cy="340.7" r="10.5" fill="#6c5088"/><circle cx="494" cy="315.7" r="10.5" fill="#6c5088"/><circle cx="494" cy="389" r="10.5" fill="#3f689e"/><circle cx="574" cy="329.4" r="10.5" fill="#6c5088"/><circle cx="574" cy="362.3" r="10.5" fill="#3f689e"/><circle cx="654" cy="324.9" r="10.5" fill="#3f689e"/><circle cx="654" cy="363.7" r="10.5" fill="#6c5088"/><circle cx="733.8" cy="339" r="10.5" fill="#6c5088"/><circle cx="733.8" cy="368.5" r="10.5" fill="#3f689e"/><circle cx="813.6" cy="399.5" r="10.5" fill="#3f689e"/><circle cx="813.6" cy="427.6" r="10.5" fill="#6c5088"/><circle cx="894" cy="214.8" r="10.5" fill="#6c5088"/><circle cx="894" cy="320.5" r="10.5" fill="#3f689e"/><path d="M431.2 241.6 L413.8 302.6 M414 341 L443.4 363.5 M560 244 L574 329" stroke="#9a9a9a" stroke-width="0.9" fill="none"/><text text-anchor="middle" x="431.3" y="239">91,658</text><text x="560.3" y="241" text-anchor="middle">82,924</text><text x="493.3" y="338.8" text-anchor="middle">87,457</text><text x="461.2" y="370" text-anchor="middle">79,119</text><text x="493.3" y="411.6" text-anchor="middle">62,870</text></svg>
<div style="left:153px;top:609px;width:650px;height:1px;background:#a3a3a3;"></div>
<div style="left:942px;top:609px;width:46px;height:1px;background:#a3a3a3;"></div>
<div style="left:9px;top:642px;width:979px;height:1px;background:#b4b4b4;"></div>
<div style="left:9px;top:643px;width:979px;height:1px;background:#f8f8f8;"></div>
<div style="left:234px;top:610px;width:569px;height:27px;background:#e7e7e7;"></div>
<div style="left:233px;top:611px;width:1px;height:27px;background:#9a9a9a;"></div>
<div style="left:234px;top:611px;width:3px;height:26px;background:linear-gradient(90deg,#d2d2d2,#e7e7e7);"></div>
<svg style="left:160.5px;top:617.6px" width="15" height="15" viewBox="0 0 15 15"><rect x="0" y="12" width="2" height="2" fill="#8f8f8f"/><rect x="3" y="9" width="2" height="5" fill="#8f8f8f"/><rect x="6" y="6" width="2" height="8" fill="#8f8f8f"/><rect x="9" y="8" width="2" height="6" fill="#8f8f8f"/><rect x="12" y="7" width="2" height="7" fill="#8f8f8f"/><path d="M9.7 0.5 h2 v2 h2 v2 h-2 v2 h-2 v-2 h-2 v-2 h2 z" fill="#a6ecaa" stroke="#10a548" stroke-width="1.1"/></svg>
<svg style="left:185.5px;top:617.6px" width="15" height="15" viewBox="0 0 15 15"><rect x="0" y="0.4" width="3.6" height="3.6" fill="#8f8f8f"/><rect x="0" y="5.6" width="3.6" height="3.6" fill="#8f8f8f"/><rect x="0" y="10.8" width="3.6" height="3.6" fill="#8f8f8f"/><rect x="5.2" y="0.4" width="3.6" height="3.6" fill="#8f8f8f"/><rect x="5.2" y="5.6" width="3.6" height="3.6" fill="#8f8f8f"/><rect x="5.2" y="10.8" width="3.6" height="3.6" fill="#8f8f8f"/><rect x="10.4" y="0.4" width="3.6" height="3.6" fill="#8f8f8f"/><rect x="10.4" y="5.6" width="3.6" height="3.6" fill="#8f8f8f"/><rect x="10.4" y="10.8" width="3.6" height="3.6" fill="#8f8f8f"/><rect x="4.8" y="-0.4" width="10" height="5.2" fill="#f0f0f0"/><path d="M5.4 0.4 V4 M5.4 4.3 H6.6" stroke="#8f8f8f" stroke-width="0.8" fill="none"/><path d="M9.7 0.5 h2 v2 h2 v2 h-2 v2 h-2 v-2 h-2 v-2 h2 z" fill="#a6ecaa" stroke="#10a548" stroke-width="1.1"/></svg>
<svg style="left:211px;top:619px" width="14" height="13" viewBox="0 0 14 13"><rect x="0" y="0" width="14" height="1.9" fill="#909090"/><rect x="0" y="3.4" width="14" height="1.9" fill="#909090"/><rect x="0" y="6.8" width="14" height="1.9" fill="#909090"/><rect x="0" y="10.2" width="14" height="1.9" fill="#909090"/></svg>
<span class="t" style="left:238px;top:617.19px;font-size:11px;line-height:14px;color:#000;letter-spacing:-0.230px;">Build Bubble Chart</span>
<svg style="left:336.7px;top:622px" width="8" height="4" viewBox="0 0 8 4"><path d="M0 0 H7.4 L3.7 4 Z" fill="#7f7f7f"/></svg>
<div style="left:351.8px;top:612px;width:1px;height:25px;background:#8f8f8f;"></div>
<span class="t" style="left:356px;top:617.19px;font-size:11px;line-height:14px;color:#000;letter-spacing:-0.309px;">Show Labels</span>
<svg style="left:427px;top:622px" width="8" height="4" viewBox="0 0 8 4"><path d="M0 0 H7.4 L3.7 4 Z" fill="#7f7f7f"/></svg>
<div style="left:441.5px;top:612px;width:1px;height:25px;background:#8f8f8f;"></div>
<span class="t" style="left:445px;top:617.19px;font-size:11px;line-height:14px;color:#000;letter-spacing:-0.168px;">Label Appearance</span>
<svg style="left:544px;top:622px" width="8" height="4" viewBox="0 0 8 4"><path d="M0 0 H7.4 L3.7 4 Z" fill="#7f7f7f"/></svg>
<div style="left:558.6px;top:612px;width:1px;height:25px;background:#8f8f8f;"></div>
<span class="t" style="left:563.4px;top:617.19px;font-size:11px;line-height:14px;color:#000;letter-spacing:-0.211px;">Overlapping Labels</span>
<svg style="left:666px;top:622px" width="8" height="4" viewBox="0 0 8 4"><path d="M0 0 H7.4 L3.7 4 Z" fill="#7f7f7f"/></svg>
<div style="left:680.6px;top:612px;width:1px;height:25px;background:#8f8f8f;"></div>
<span class="t" style="left:684.5px;top:617.19px;font-size:11px;line-height:14px;color:#000;letter-spacing:-0.271px;">Label Repositioning</span>
<svg style="left:789px;top:622px" width="8" height="4" viewBox="0 0 8 4"><path d="M0 0 H7.4 L3.7 4 Z" fill="#7f7f7f"/></svg>
<div style="left:803px;top:610px;width:113px;height:28px;background:#fff;border-left:1px solid #7a7a7a;border-bottom:1px solid #a9a9a9;"></div>
<span class="t" style="left:808.6px;top:616.89px;font-size:11px;line-height:14px;color:#000;font-weight:bold;letter-spacing:0.237px;">Show &amp; Hide Labels</span>
<div style="left:915.5px;top:609px;width:26.5px;height:33px;background:linear-gradient(90deg,#f8f8f8 0,#f0f0f0 2px);"></div>
<svg style="left:919.4px;top:620px" width="6" height="10" viewBox="0 0 6 10"><path d="M6 0 V9.4 L0 4.7 Z" fill="#6e6e6e"/></svg>
<svg style="left:945px;top:620px" width="6" height="10" viewBox="0 0 6 10"><path d="M0 0 V9.4 L6 4.7 Z" fill="#6e6e6e"/></svg>
</body></html>
